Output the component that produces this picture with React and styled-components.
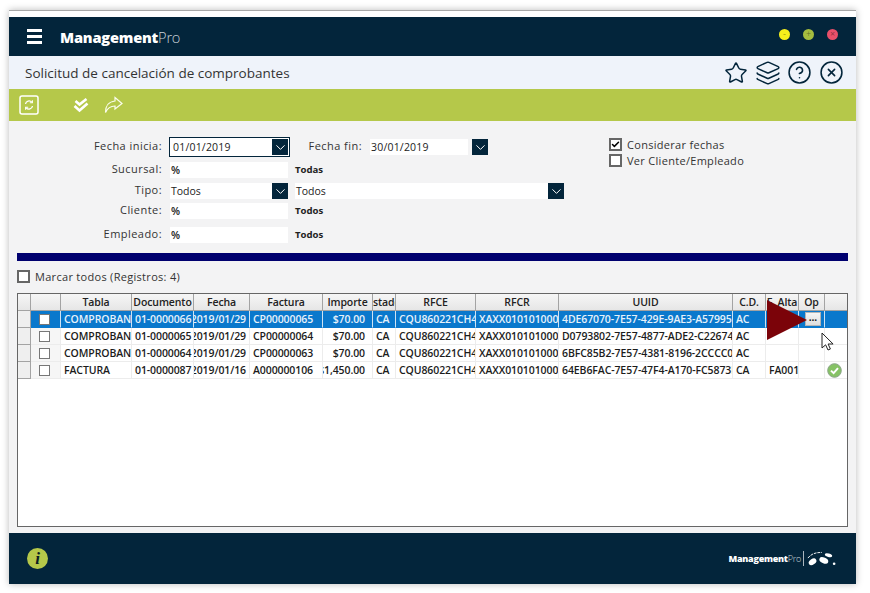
import styled, { createGlobalStyle } from 'styled-components';
import { Star, Layers, CircleHelp, CircleX, ChevronDown, Check } from 'lucide-react';

const GlobalStyle = createGlobalStyle`
  html, body { margin: 0; padding: 0; background: #fff; }
  body { font-family: 'Open Sans', 'Noto Sans', sans-serif; color: #222; }
`;

const navy = '#03253b';

const columns = [13, 30, 71, 62, 56, 73, 50, 23, 80, 83, 174, 33, 33, 26, 24];
const headers = ['', '', 'Tabla', 'Documento', 'Fecha', 'Factura', 'Importe', 'Estado', 'RFCE', 'RFCR', 'UUID', 'C.D.', 'F. Alta', 'Op', ''];

const rows = [
  { tabla: 'COMPROBANTE', doc: '01-0000066', fecha: '2019/01/29', factura: 'CP00000065', importe: '$70.00', cd: 'AC', uuid: '4DE67070-7E57-429E-9AE3-A57995C1B2D3', alta: '', selected: true },
  { tabla: 'COMPROBANTE', doc: '01-0000065', fecha: '2019/01/29', factura: 'CP00000064', importe: '$70.00', cd: 'AC', uuid: 'D0793802-7E57-4877-ADE2-C22674A1F0E9', alta: '' },
  { tabla: 'COMPROBANTE', doc: '01-0000064', fecha: '2019/01/29', factura: 'CP00000063', importe: '$70.00', cd: 'AC', uuid: '6BFC85B2-7E57-4381-8196-2CCCC09D7E12', alta: '' },
  { tabla: 'FACTURA', doc: '01-0000087', fecha: '2019/01/16', factura: 'A000000106', importe: '$1,450.00', cd: 'CA', uuid: '64EB6FAC-7E57-47F4-A170-FC5873BE6D40', alta: 'FA0010', ok: true },
];

const Page = styled.div`
  width: 870px;
  height: 593px;
  padding: 10px 14px 0 9px;
  box-sizing: border-box;
  overflow: hidden;
`;

const Win = styled.div`
  width: 847px;
  height: 574px;
  display: flex;
  flex-direction: column;
  box-sizing: border-box;
  border-top: 1px solid #a8a8a8;
  padding-top: 6px;
  box-shadow: 0 0 7px rgba(0, 0, 0, 0.28);
  background: #fff;
`;

const Header = styled.header`
  height: 39px;
  flex: none;
  background: ${navy};
  display: flex;
  align-items: center;
  padding-left: 18px;
  padding-right: 18px;
`;

const Burger = styled.div`
  width: 15px;
  display: flex;
  flex-direction: column;
  gap: 3px;
  margin-right: 18px;
  span { height: 3px; background: #fff; display: block; }
`;

const Logo = styled.div`
  color: #fff;
  font-size: 14.6px;
  font-weight: 800;
  letter-spacing: -0.2px;
  span { font-weight: 300; color: #c8d2d9; }
`;

const Dots = styled.div`
  margin-left: auto;
  display: flex;
  gap: 13px;
  margin-top: -5px;
`;

const Dot = styled.div`
  width: 11px;
  height: 11px;
  border-radius: 50%;
  background: ${(p) => p.$color};
  color: rgba(0, 0, 0, 0.4);
  font-size: 9px;
  line-height: 10px;
  text-align: center;
`;

const TitleBar = styled.div`
  height: 33px;
  flex: none;
  background: #eff3fa;
  display: flex;
  align-items: center;
  padding: 0 12.5px 0 16px;
  color: #333;
  font-size: 13.5px;
`;

const TitleIcons = styled.div`
  margin-left: auto;
  display: flex;
  align-items: center;
  gap: 6.5px;
  color: ${navy};
`;

const Toolbar = styled.div`
  height: 32px;
  flex: none;
  background: #b5c84a;
  display: flex;
  align-items: center;
  padding-left: 10px;
`;

const ToolIcon = styled.svg`
  display: block;
  margin-left: ${(p) => p.$gap || 0}px;
`;

const Body = styled.div`
  flex: 1;
  background: #f3f3f4;
  padding: 16px 8px 6px;
  display: flex;
  flex-direction: column;
  min-height: 0;
`;

const Filters = styled.div`
  display: flex;
  height: 116px;
  flex: none;
`;

const FieldsCol = styled.div`
  width: 592px;
  flex: none;
`;

const Row = styled.div`
  display: flex;
  align-items: center;
  margin-top: ${(p) => p.$top || 0}px;
  height: ${(p) => p.$height || 16}px;
`;

const Label = styled.div`
  width: ${(p) => p.$width || 145}px;
  flex: none;
  text-align: right;
  font-size: 11px;
  letter-spacing: 0.45px;
  color: #333;
  margin-top: -4px;
  margin-left: ${(p) => p.$left || 0}px;
`;

const Input = styled.div`
  width: ${(p) => p.$width}px;
  height: 16px;
  margin-left: ${(p) => p.$left || 8}px;
  flex: none;
  background: #fff;
  font-size: 10.5px;
  line-height: 17px;
  font-weight: ${(p) => (p.$bold ? 600 : 400)};
  padding-left: 1px;
  box-sizing: border-box;
  color: #222;
  letter-spacing: ${(p) => (p.$date ? '0.2px' : '0')};
`;

const Focused = styled.div`
  width: 121px;
  height: 20px;
  margin-left: 7px;
  flex: none;
  box-sizing: border-box;
  border: 1px solid ${navy};
  background: #fff;
  display: flex;
  align-items: center;
  justify-content: space-between;
  padding: 0 1px 0 3px;
  font-size: 10.5px;
  letter-spacing: 0.2px;
`;

const DropBtn = styled.div`
  width: 16px;
  height: 16px;
  flex: none;
  background: ${navy};
  color: #fff;
  display: flex;
  align-items: center;
  justify-content: center;
  margin-left: ${(p) => p.$left || 0}px;
`;

const Note = styled.div`
  font-size: 9.6px;
  font-weight: 700;
  margin-left: 7px;
  margin-top: -1px;
  color: #222;
`;

const ChecksCol = styled.div`
  display: flex;
  flex-direction: column;
  gap: 3px;
  margin-top: 1px;
`;

const CheckLine = styled.div`
  display: flex;
  align-items: center;
  gap: 5px;
  font-size: 11px;
  letter-spacing: 0.3px;
  color: #333;
  height: 13px;
`;

const Box = styled.div`
  width: 13px;
  height: 13px;
  flex: none;
  box-sizing: border-box;
  border: 2px solid #666;
  background: #fff;
  color: #000;
  display: flex;
  align-items: center;
  justify-content: center;
`;

const BlueBar = styled.div`
  height: 8px;
  flex: none;
  background: #00006f;
`;

const MarkAll = styled(CheckLine)`
  margin-top: 9px;
  margin-bottom: 10px;
`;

const GridWrap = styled.div`
  position: relative;
  flex: 1;
  min-height: 0;
  box-sizing: border-box;
  border: 1px solid #666;
  background: #fff;
  overflow: hidden;
`;

const Table = styled.div`
  display: grid;
  grid-template-columns: ${columns.map((c) => `${c}px`).join(' ')};
  grid-auto-rows: 17px;
`;

const HeadCell = styled.div`
  height: 17px;
  box-sizing: border-box;
  border-right: 1px solid #a3a3a3;
  border-bottom: 1px solid #a3a3a3;
  background: linear-gradient(#f6f6f6, #e6e6e6);
  font-size: 10.5px;
  font-weight: 600;
  letter-spacing: -0.1px;
  display: flex;
  align-items: center;
  justify-content: center;
  overflow: hidden;
  white-space: nowrap;
  color: #222;
`;

const Cell = styled.div`
  height: 17px;
  box-sizing: border-box;
  border-right: 1px solid ${(p) => (p.$selected ? '#cfe3f3' : '#ececec')};
  border-bottom: 1px solid ${(p) => (p.$selected ? '#0a78cc' : '#ececec')};
  background: ${(p) => (p.$selected ? '#0a78cc' : '#fff')};
  color: ${(p) => (p.$selected ? '#e6f2fb' : '#1c1c1c')};
  font-size: 10.5px;
  font-weight: 600;
  letter-spacing: -0.1px;
  display: flex;
  align-items: center;
  justify-content: ${(p) => p.$align || 'flex-start'};
  padding: 0 ${(p) => p.$pad ?? 3}px 0 3px;
  overflow: hidden;
  white-space: nowrap;
`;

const RowHead = styled.div`
  height: 17px;
  box-sizing: border-box;
  background: #efefef;
  border-right: 1px solid #a3a3a3;
  border-bottom: 1px solid #a3a3a3;
`;

const BoxCell = styled(Cell)`
  justify-content: center;
  background: ${(p) => (p.$selected ? '#0a78cc' : '#f6f6f6')};
  padding: 0 3px 0 0;
`;

const RowCheck = styled.div`
  width: 11px;
  height: 11px;
  box-sizing: border-box;
  border: 1px solid #777;
  background: #fff;
`;

const OpButton = styled.div`
  width: 16px;
  height: 14px;
  background: linear-gradient(#f5f5f5, #dedede);
  border: 1px solid #b5b5b5;
  box-sizing: border-box;
  color: #111;
  font-size: 10px;
  font-weight: 700;
  line-height: 9px;
  text-align: center;
`;

const OpCell = styled(Cell)`
  padding: 0 0 0 6px;
`;

const Arrow = styled.svg`
  position: absolute;
  left: 749px;
  top: 6px;
`;

const Pointer = styled.svg`
  position: absolute;
  left: 803px;
  top: 38px;
`;

const Footer = styled.footer`
  height: 51px;
  flex: none;
  background: ${navy};
  display: flex;
  align-items: center;
  padding: 0 20px 0 18px;
`;

const Info = styled.div`
  width: 21px;
  height: 21px;
  border-radius: 50%;
  background: #b5c84a;
  color: #0b1c22;
  font-family: 'Liberation Serif', serif;
  font-style: italic;
  font-weight: 700;
  font-size: 17px;
  line-height: 21px;
  text-align: center;
`;

const FootLogo = styled.div`
  margin-left: auto;
  display: flex;
  align-items: center;
  color: #fff;
  font-size: 9px;
  font-weight: 800;
  letter-spacing: -0.25px;
  span { font-weight: 300; color: #cfd8de; }
`;

const FootRule = styled.div`
  width: 1px;
  height: 15px;
  background: #aab6be;
  margin: 0 2px;
`;

const Chevron = () => <ChevronDown size={15} strokeWidth={1.6} />;

const App = () => {
  const renderRow = (r, i) => {
    const s = r.selected;
    return [
      <RowHead key={`${i}h`} />,
      <BoxCell key={`${i}b`} $selected={s}><RowCheck /></BoxCell>,
      <Cell key={`${i}t`} $selected={s}>{r.tabla}</Cell>,
      <Cell key={`${i}d`} $selected={s}>{r.doc}</Cell>,
      <Cell key={`${i}f`} $selected={s} $align="flex-end">{r.fecha}</Cell>,
      <Cell key={`${i}c`} $selected={s}>{r.factura}</Cell>,
      <Cell key={`${i}i`} $selected={s} $align="flex-end" $pad={7}>{r.importe}</Cell>,
      <Cell key={`${i}e`} $selected={s}>CA</Cell>,
      <Cell key={`${i}r`} $selected={s}>CQU860221CH4</Cell>,
      <Cell key={`${i}x`} $selected={s}>XAXX010101000</Cell>,
      <Cell key={`${i}u`} $selected={s}>{r.uuid}</Cell>,
      <Cell key={`${i}cd`} $selected={s}>{r.cd}</Cell>,
      <Cell key={`${i}a`} $selected={s}>{r.alta}</Cell>,
      <OpCell key={`${i}o`} $selected={s}>{s && <OpButton>...</OpButton>}</OpCell>,
      <Cell key={`${i}z`} $selected={s} $align="center" $pad={8}>
        {r.ok && (
          <svg width="15" height="15" viewBox="0 0 15 15" style={{ flex: 'none' }}>
            <circle cx="7.5" cy="7.5" r="6.8" fill="#86c265" stroke="#8aa487" />
            <path d="M4 7.6l2.6 2.5L11 5.2" fill="none" stroke="#fff" strokeWidth="2" />
          </svg>
        )}
      </Cell>,
    ];
  };

  return (
    <Page>
      <GlobalStyle />
      <Win>
        <Header>
          <Burger><span /><span /><span /></Burger>
          <Logo>Management<span>Pro</span></Logo>
          <Dots>
            <Dot $color="#f6f01c">-</Dot>
            <Dot $color="#a5bd3f">+</Dot>
            <Dot $color="#e8506a">×</Dot>
          </Dots>
        </Header>
        <TitleBar>
          Solicitud de cancelación de comprobantes
          <TitleIcons>
            <Star size={24} strokeWidth={1.5} />
            <Layers size={26} strokeWidth={1.4} />
            <CircleHelp size={25} strokeWidth={1.5} />
            <CircleX size={25} strokeWidth={1.5} />
          </TitleIcons>
        </TitleBar>
        <Toolbar>
          <ToolIcon width="20" height="20" viewBox="0 0 20 20" fill="none" stroke="#fff">
            <rect x="1" y="1" width="18" height="18" rx="2" strokeWidth="1.5" />
            <path d="M6.5 9a3.6 3.6 0 0 1 6.3-1.8M13.5 11a3.6 3.6 0 0 1-6.3 1.8" strokeWidth="1.3" />
            <path d="M13.4 5.2v2.6h-2.6M6.6 14.8v-2.6h2.6" strokeWidth="1.1" />
          </ToolIcon>
          <ToolIcon $gap={34} width="16" height="15" viewBox="0 0 16 15" fill="none" stroke="#fff" strokeWidth="2.6">
            <path d="M2.5 3l4 3.5L13.5 1" />
            <path d="M1.5 8l5 4.5L14.5 5.5" />
          </ToolIcon>
          <ToolIcon $gap={15} width="19" height="18" viewBox="0 0 19 18" fill="none" stroke="#fbfdee" strokeWidth="1.2">
            <path d="M11 1.5l7 6-7 5.5V10C6.5 10 3.5 12 1.5 16.5 1.5 10 5 5.5 11 5z" />
          </ToolIcon>
        </Toolbar>
        <Body>
          <Filters>
            <FieldsCol>
              <Row $height={20}>
                <Label>Fecha inicia:</Label>
                <Focused>01/01/2019<DropBtn><Chevron /></DropBtn></Focused>
                <Label $width={54} $left={18}>Fecha fin:</Label>
                <Input $width={98} $date>30/01/2019</Input>
                <DropBtn $left={4}><Chevron /></DropBtn>
              </Row>
              <Row $top={5}>
                <Label>Sucursal:</Label>
                <Input $width={118} $bold>%</Input>
                <Note>Todas</Note>
              </Row>
              <Row $top={5}>
                <Label>Tipo:</Label>
                <Input $width={102}>Todos</Input>
                <DropBtn><Chevron /></DropBtn>
                <Input $width={253} $left={7}>Todos</Input>
                <DropBtn><Chevron /></DropBtn>
              </Row>
              <Row $top={4}>
                <Label>Cliente:</Label>
                <Input $width={118} $bold>%</Input>
                <Note>Todos</Note>
              </Row>
              <Row $top={8}>
                <Label>Empleado:</Label>
                <Input $width={118} $bold>%</Input>
                <Note>Todos</Note>
              </Row>
            </FieldsCol>
            <ChecksCol>
              <CheckLine>
                <Box><Check size={11} strokeWidth={4} /></Box>
                Considerar fechas
              </CheckLine>
              <CheckLine>
                <Box />
                Ver Cliente/Empleado
              </CheckLine>
            </ChecksCol>
          </Filters>
          <BlueBar />
          <MarkAll>
            <Box />
            Marcar todos (Registros: 4)
          </MarkAll>
          <GridWrap>
            <Table>
              {headers.map((h, i) => <HeadCell key={i}>{h}</HeadCell>)}
              {rows.map(renderRow)}
            </Table>
            <Arrow width="40" height="40" viewBox="0 0 40 40">
              <path d="M0 0L40 20L0 40z" fill="#7b0309" />
            </Arrow>
            <Pointer width="14" height="20" viewBox="0 0 14 20">
              <path d="M1 1v15l3.6-3.2L7 18l2.4-1-2.3-5h5z" fill="#fff" stroke="#222" strokeWidth="1" />
            </Pointer>
          </GridWrap>
        </Body>
        <Footer>
          <Info>i</Info>
          <FootLogo>
            <div>Management<span>Pro</span></div>
            <FootRule />
            <svg width="30" height="18" viewBox="0 0 32 18" fill="#fff">
              <ellipse cx="7" cy="12" rx="4.5" ry="3" transform="rotate(-35 7 12)" />
              <ellipse cx="19" cy="10.5" rx="5" ry="3" transform="rotate(25 19 10.5)" />
              <ellipse cx="24" cy="5" rx="4" ry="1.8" transform="rotate(15 24 5)" />
              <circle cx="30" cy="14" r="1.4" />
              <path d="M2 8C6 3 11 2 17 2" fill="none" stroke="#fff" strokeWidth="1" strokeDasharray="3 1" />
            </svg>
          </FootLogo>
        </Footer>
      </Win>
    </Page>
  );
};

export default App;
